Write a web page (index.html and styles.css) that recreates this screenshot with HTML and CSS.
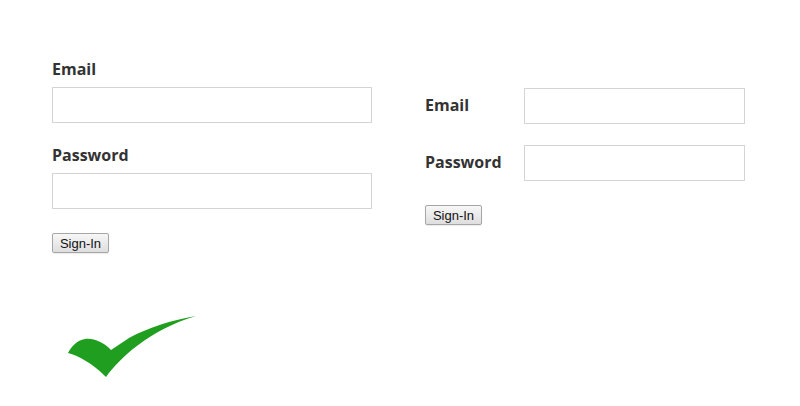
FILE: index.html
```html
<!DOCTYPE html>
<html>
<head>
<meta charset="utf-8">
<link rel="stylesheet" href="styles.css">
</head>
<body>
<div class="page">
  <div class="forms">
    <form class="stacked">
      <label class="lbl" for="e1">Email</label>
      <input class="field" id="e1" type="text">
      <label class="lbl lbl-gap" for="p1">Password</label>
      <input class="field" id="p1" type="password">
      <button class="btn btn-left" type="button">Sign-In</button>
    </form>
    <form class="inline">
      <div class="row">
        <label class="lbl" for="e2">Email</label>
        <input class="field field-r" id="e2" type="text">
      </div>
      <div class="row">
        <label class="lbl" for="p2">Password</label>
        <input class="field field-r" id="p2" type="password">
      </div>
      <button class="btn" type="button">Sign-In</button>
    </form>
  </div>
  <svg class="check" width="130" height="62" viewBox="0 0 130 62">
    <path d="M129 0 C 105 4, 80 12, 62 22 L 44 34 C 36 26, 27 22, 18 23 C 10 24, 4 31, 1 37 C 12 40, 25 47, 39 61 C 53 42, 82 14, 129 0 Z" fill="#1f9e1f"/>
  </svg>
</div>
</body>
</html>
```

FILE: styles.css
```css
html, body {
  margin: 0;
  padding: 0;
  background: #ffffff;
}
body {
  font-family: "Open Sans", "DejaVu Sans", sans-serif;
  color: #333333;
}
.page {
  padding: 58px 0 0 52px;
}
.forms {
  display: flex;
  align-items: flex-start;
}
.stacked {
  display: flex;
  flex-direction: column;
  align-items: flex-start;
  width: 320px;
  margin: 0;
}
.lbl {
  font-size: 16px;
  font-weight: 700;
  line-height: 22px;
  color: #333333;
}
.lbl-gap {
  margin-top: 21px;
}
.field {
  box-sizing: border-box;
  width: 320px;
  height: 36px;
  border: 1px solid #d4d4d4;
  margin: 7px 0 0 0;
  padding: 0 6px;
  background: #fff;
  outline: none;
}
.btn {
  box-sizing: border-box;
  height: 20px;
  width: 57px;
  padding: 0;
  font-family: "Liberation Sans", Arial, sans-serif;
  font-size: 13px;
  color: #111;
  border: 1px solid #a6a6a6;
  border-radius: 2px;
  background: linear-gradient(#f7f7f7, #dedede);
  box-shadow: 0 1px 1px rgba(0,0,0,0.08);
}
.btn-left {
  margin-top: 24px;
}
.inline {
  margin: 30px 0 0 53px;
  display: flex;
  flex-direction: column;
  align-items: flex-start;
}
.row {
  display: flex;
  align-items: center;
  margin-bottom: 21px;
}
.row .lbl {
  width: 99px;
  margin-top: -3px;
}
.field-r {
  width: 221px;
  margin: 0;
}
.inline .btn {
  margin-top: 3px;
}
.check {
  display: block;
  margin: 63px 0 0 15px;
}
```
